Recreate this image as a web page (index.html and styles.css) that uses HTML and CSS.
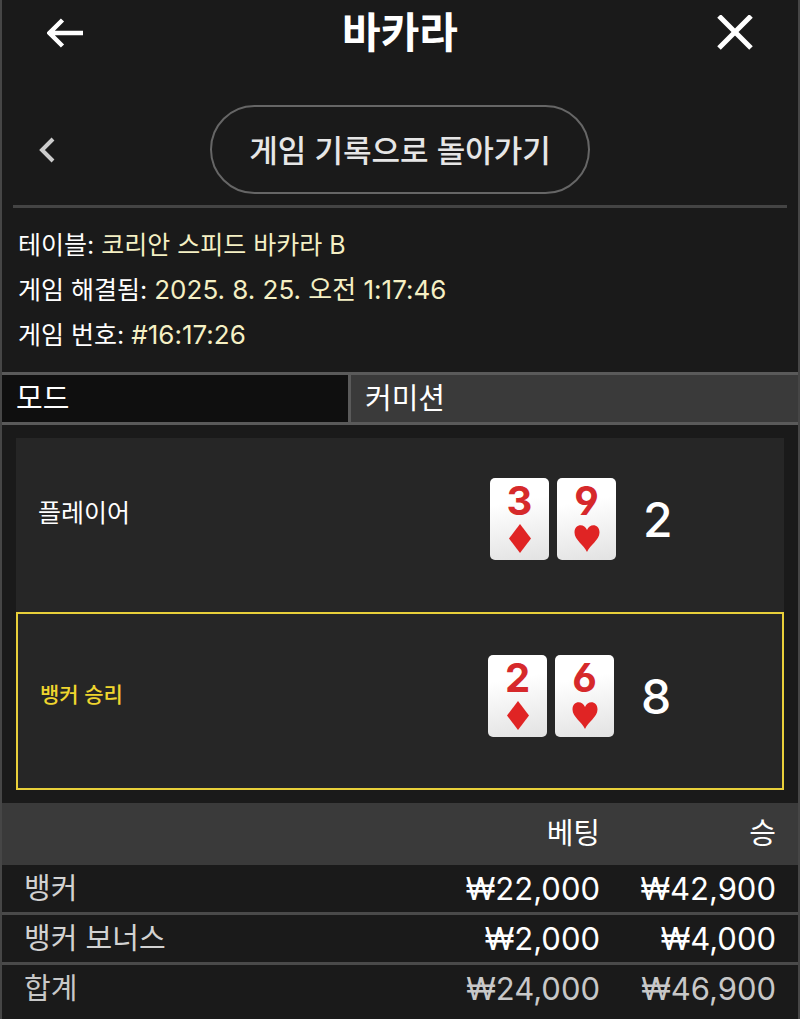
FILE: index.html
```html
<!DOCTYPE html>
<html lang="ko">
<head>
    <meta charset="UTF-8">
    <meta name="viewport" content="width=device-width, initial-scale=1.0">
    <title>바카라</title>
    <link rel="stylesheet" href="styles.css">
</head>
<body>
    <main class="history">
        <header class="top-bar">
            <button class="icon-button back" type="button" aria-label="뒤로">
                <svg width="36" height="30" viewBox="0 0 36 30" fill="none" stroke="currentColor" stroke-width="4.500">
                    <path d="M15.500 2 2.500 15l13 13M2.500 15H36"/>
                </svg>
            </button>
            <h1>바카라</h1>
            <button class="icon-button close" type="button" aria-label="닫기">
                <svg width="36" height="36" viewBox="0 0 36 36" fill="none" stroke="currentColor" stroke-width="5">
                    <path d="M2 1l32 32M34 1l-32 32"/>
                </svg>
            </button>
        </header>

        <nav class="record-nav">
            <button class="icon-button previous" type="button" aria-label="이전">
                <svg width="16" height="26" viewBox="0 0 16 26" fill="none" stroke="currentColor" stroke-width="4">
                    <path d="M14 2 3 13l11 11"/>
                </svg>
            </button>
            <button class="return-button" type="button">게임 기록으로 돌아가기</button>
        </nav>

        <dl class="info">
            <div><dt>테이블:</dt> <dd>코리안 스피드 바카라 B</dd></div>
            <div><dt>게임 해결됨:</dt> <dd class="number">2025. 8. 25. 오전 1:17:46</dd></div>
            <div><dt>게임 번호:</dt> <dd class="number">#16:17:26</dd></div>
        </dl>

        <div class="mode">
            <div class="mode-label">모드</div>
            <div class="mode-value">커미션</div>
        </div>

        <section class="hands">
            <div class="hand player">
                <h2>플레이어</h2>
                <div class="cards">
                    <div class="card">
                        <span>3</span>
                        <svg width="22" height="29" viewBox="0 0 22 29"><path d="M11 0 22 14.500 11 29 0 14.500z"/></svg>
                    </div>
                    <div class="card">
                        <span>9</span>
                        <svg width="26" height="29" viewBox="0 0 26 29"><path d="M13 28C10 21 .5 16 .5 8.500.500-.5 10.500-1 13 6c2.500-7 12.500-6.500 12.500 2.500C25.500 16 16 21 13 28z"/></svg>
                    </div>
                </div>
                <span class="score">2</span>
            </div>
            <div class="hand banker winner">
                <h2>뱅커 승리</h2>
                <div class="cards">
                    <div class="card">
                        <span>2</span>
                        <svg width="22" height="29" viewBox="0 0 22 29"><path d="M11 0 22 14.500 11 29 0 14.500z"/></svg>
                    </div>
                    <div class="card">
                        <span>6</span>
                        <svg width="26" height="29" viewBox="0 0 26 29"><path d="M13 28C10 21 .5 16 .5 8.500.500-.5 10.500-1 13 6c2.500-7 12.500-6.500 12.500 2.500C25.500 16 16 21 13 28z"/></svg>
                    </div>
                </div>
                <span class="score">8</span>
            </div>
        </section>

        <table class="bets">
            <thead>
                <tr><td></td><th scope="col">베팅</th><th scope="col">승</th></tr>
            </thead>
            <tbody>
                <tr><th scope="row">뱅커</th><td>₩22,000</td><td>₩42,900</td></tr>
                <tr><th scope="row">뱅커 보너스</th><td>₩2,000</td><td>₩4,000</td></tr>
                <tr class="total"><th scope="row">합계</th><td>₩24,000</td><td>₩46,900</td></tr>
            </tbody>
        </table>
    </main>
</body>
</html>
```
FILE: styles.css
```css
* {
    margin: 0;
    padding: 0;
    box-sizing: border-box;
}
body {
    font-family: Inter, "Noto Sans CJK KR", sans-serif;
    background-color: #1a1a1a;
    color: #ffffff;
}
button {
    font-family: inherit;
    color: inherit;
    background: none;
    border: none;
    cursor: pointer;
}
svg {
    display: block;
}
.history {
    min-height: 100vh;
    border-left: 2px solid #464646;
    border-right: 2px solid #464646;
}
.top-bar {
    display: grid;
    grid-template-columns: 1fr auto 1fr;
    align-items: center;
    height: 66px;
    padding: 0 45px;
}
h1 {
    font-size: 42px;
    line-height: 60px;
    font-weight: 700;
}
.close {
    justify-self: end;
}
.back {
    justify-self: start;
}
.record-nav {
    display: grid;
    grid-template-columns: 1fr auto 1fr;
    align-items: center;
    margin: 0 11px;
    padding: 39px 26px 11px;
    border-bottom: 3px solid #444444;
}
.previous {
    justify-self: start;
    color: #cccccc;
}
.return-button {
    height: 89px;
    padding: 0 37px 3px;
    border: 2px solid #666666;
    border-radius: 45px;
    color: #e6e6e6;
    font-size: 31px;
    font-weight: 500;
}
.info {
    padding: 15px 16px 14px;
    font-size: 25px;
    line-height: 45px;
}
.info dt,
.info dd {
    display: inline;
}
.info dd {
    color: #f5f0c4;
}
.info .number {
    font-size: 26px;
    line-height: 1;
}
.mode {
    display: grid;
    grid-template-columns: 346px 1fr;
    border-top: 3px solid #5a5a5a;
    border-bottom: 3px solid #5a5a5a;
    font-size: 29px;
    line-height: 47px;
}
.mode-label {
    padding: 0 14px;
    background-color: #0f0f0f;
}
.mode-value {
    padding: 0 14px;
    border-left: 3px solid #5a5a5a;
    background-color: #3a3a3a;
}
.hands {
    padding: 13px 14px;
}
.hand {
    display: grid;
    grid-template-columns: 1fr auto 141px;
    align-items: center;
    column-gap: 27px;
    height: 174px;
    padding: 0 0 12px 22px;
    background-color: #262626;
}
.hand h2 {
    font-size: 25px;
    font-weight: 400;
}
.player h2 {
    padding-bottom: 16px;
}
.hand.winner {
    height: 178px;
    padding-bottom: 10px;
    border: 2px solid #e8cf3a;
}
.winner h2 {
    padding-bottom: 6px;
    color: #efd52e;
    font-size: 21px;
    font-weight: 500;
}
.cards {
    display: flex;
    gap: 8px;
}
.card {
    display: flex;
    flex-direction: column;
    align-items: center;
    width: 59px;
    height: 82px;
    border-radius: 5px;
    background: linear-gradient(170deg, #ffffff 30%, #e2e2e2);
    color: #d6292b;
    font-size: 40px;
    font-weight: 700;
    font-feature-settings: "cv03", "cv04";
    line-height: 46px;
}
.card svg {
    fill: #e02424;
}
.score {
    font-size: 48px;
    font-weight: 500;
}
.bets {
    width: 100%;
    border-collapse: collapse;
    font-size: 29px;
    line-height: 47px;
}
.bets th,
.bets td {
    padding: 0 22px 0 0;
    font-weight: 400;
    text-align: right;
    white-space: nowrap;
}
.bets th:last-child,
.bets td:last-child {
    width: 176px;
}
.bets thead {
    background-color: #3a3a3a;
    line-height: 62px;
}
.bets tbody th {
    padding-left: 22px;
    color: #d2d2d2;
    text-align: left;
}
.bets tbody td {
    font-size: 31px;
}
.bets tbody tr + tr {
    border-top: 3px solid #4a4a4a;
}
.bets .total td,
.bets .total th {
    color: #c8c8c8;
}
```
